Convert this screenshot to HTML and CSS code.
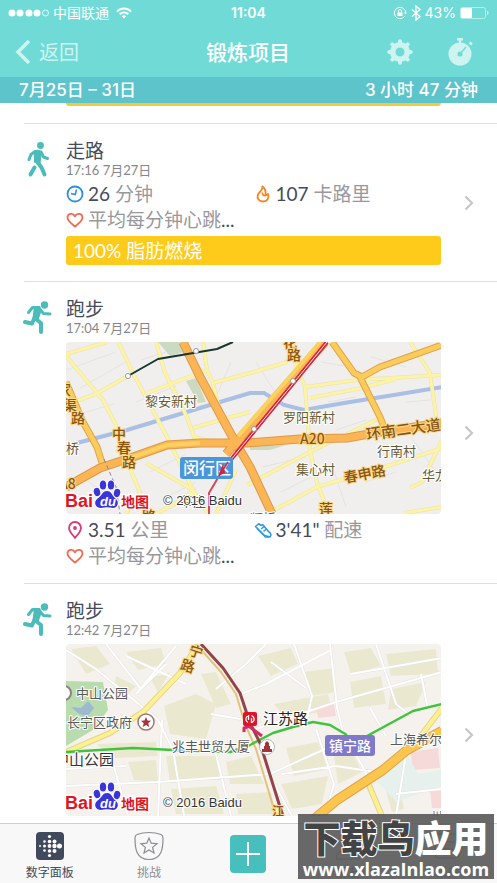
FILE: index.html
```html
<!DOCTYPE html>
<html lang="zh-CN">
<head>
  <meta charset="UTF-8">
  <meta name="viewport" content="width=device-width, initial-scale=1.0">
  <title>锻炼项目</title>
  <link rel="stylesheet" href="styles.css">
</head>
<body>
  <svg class="defs" aria-hidden="true">
    <symbol id="runner" viewBox="0 0 30 34">
      <circle cx="21.500" cy="4" r="3.700"/>
      <path d="M5.500 11.500L9.500 6.500L15.500 6.500" class="limb thin"/>
      <path d="M15 9L11.500 17L18 22V31" class="limb"/>
      <path d="M16 7.500L20.500 12.500L27 13" class="limb thin"/>
      <path d="M11 18L9 22.500L2 21" class="limb"/>
      <path d="M11 5L17 5L19 9L15.500 18.500L9.500 17Z"/>
    </symbol>
    <symbol id="heart" viewBox="0 0 18 18">
      <path d="M9 15.500C5.500 12.500 1.500 10 1.500 6.500C1.500 2.500 7 1.500 9 5.200C11 1.500 16.500 2.500 16.500 6.500C16.500 10 12.500 12.500 9 15.500Z" fill="none" stroke="#f26a50" stroke-width="1.800" stroke-linejoin="round"/>
    </symbol>
    <symbol id="pin" viewBox="0 0 18 18">
      <path d="M9 17C6 13 3 10.500 3 7A6 6 0 0 1 15 7C15 10.500 12 13 9 17Z" fill="none" stroke="#db3a78" stroke-width="1.800" stroke-linejoin="round"/>
      <circle cx="9" cy="7" r="1.900" fill="#db3a78"/>
    </symbol>
    <symbol id="shoe" viewBox="0 0 18 18">
      <path d="M1.500 5.500L5 2.500C6 4.500 7.500 4.500 8.500 3.500L15 11C17 12 17.500 14 16 16L10.500 14.500L1.500 5.500Z" fill="none" stroke="#2e9ae0" stroke-width="1.600" stroke-linejoin="round"/>
      <path d="M3 7.500L11.500 16H15M7 8L10 5.500M9.500 10.500L12.500 8" fill="none" stroke="#2e9ae0" stroke-width="1.500"/>
    </symbol>
    <symbol id="chevron" viewBox="0 0 10 16">
      <path d="M1.500 1.500L8 8L1.500 14.500" fill="none" stroke="#c6c6ca" stroke-width="2.200"/>
    </symbol>
    <symbol id="baidu" viewBox="0 0 180 34" overflow="visible">
      <g class="logo-text">
        <text x="-1" y="27" font-size="18">Bai</text>
        <text x="55" y="27" font-size="14">地图</text>
      </g>
      <g fill="#3a35d8" stroke="#fff" stroke-width="2" paint-order="stroke">
        <ellipse cx="31" cy="12" rx="3.200" ry="4.200" transform="rotate(-15 31 12)"/>
        <ellipse cx="37" cy="5" rx="3.200" ry="4.500"/>
        <ellipse cx="45" cy="5" rx="3.200" ry="4.500"/>
        <ellipse cx="51" cy="13" rx="3.200" ry="4.200" transform="rotate(15 51 13)"/>
        <path d="M41 11C46 11 46 16 50 19C54 23 51 28 47 28C43 27 39 27 35 28C30 28 27 23 31 19C36 16 36 11 41 11Z"/>
      </g>
      <text x="34" y="26" class="logo-du">du</text>
      <text x="97" y="25" class="credit">© 2016 Baidu</text>
    </symbol>
  </svg>

  <header class="header">
    <div class="status">
      <div class="status-left">
        <svg width="41" height="10" viewBox="0 0 41 10">
          <g fill="#fff"><circle cx="4" cy="5" r="3.500"/><circle cx="12" cy="5" r="3.500"/><circle cx="21" cy="5" r="3.500"/><circle cx="29" cy="5" r="3.500"/></g>
          <circle cx="37.500" cy="5" r="3" fill="none" stroke="#fff" stroke-width=".8"/>
        </svg>
        <span>中国联通</span>
        <svg width="16" height="12" viewBox="0 0 16 12" fill="none" stroke="#fff" stroke-width="2">
          <path d="M1 4.500C5 .5 11 .5 15 4.500M3.700 7.200C6.200 4.900 9.800 4.900 12.300 7.200"/>
          <path d="M8 11.500L5.700 9.200C7 8 9 8 10.300 9.200Z" fill="#fff" stroke="none"/>
        </svg>
      </div>
      <strong>11:04</strong>
      <div class="status-right">
        <svg width="14" height="14" viewBox="0 0 14 14" fill="none" stroke="#fff">
          <path d="M11.500 10.500A5.700 5.700 0 1 1 12.700 7"/>
          <path d="M11 6.500H14L12.600 8.500Z" fill="#fff" stroke="none"/>
          <rect x="4.500" y="6.500" width="5" height="3.500" fill="#fff" stroke="none"/>
          <path d="M5.500 6.500V5A1.500 1.500 0 0 1 8.500 5V6.500"/>
        </svg>
        <svg width="10" height="16" viewBox="0 0 10 16" fill="none" stroke="#fff" stroke-width="1.300">
          <path d="M1 4.500L9 11.500L5 15V1L9 4.500L1 11.500"/>
        </svg>
        <span>43%</span>
        <svg width="29" height="12" viewBox="0 0 29 12">
          <rect x=".5" y=".5" width="25" height="11" rx="2" fill="none" stroke="#b5eeea"/>
          <rect x="1" y="1" width="11" height="10" rx="1" fill="#fff"/>
          <path d="M27 4C29 4.500 29 7.500 27 8Z" fill="#d0f3f0"/>
        </svg>
      </div>
    </div>
    <nav class="nav">
      <button type="button" class="back">
        <svg width="16" height="26" viewBox="0 0 16 26"><path d="M14 2L3 13L14 24" fill="none" stroke="currentColor" stroke-width="3.500"/></svg>
        返回
      </button>
      <h1>锻炼项目</h1>
      <div class="actions">
        <button type="button" aria-label="设置">
          <svg width="26" height="26" viewBox="-13 -13 26 26">
            <circle r="7.300" fill="none" stroke="currentColor" stroke-width="5.500"/>
            <g stroke="currentColor" stroke-width="4" stroke-linecap="round">
              <path d="M0 -10.800V-9M0 10.800V9M-10.800 0H-9M10.800 0H9M-7.700 -7.700L-7 -7M7.700 7.700L7 7M-7.700 7.700L-7 7M7.700 -7.700L7 -7"/>
            </g>
          </svg>
        </button>
        <button type="button" aria-label="秒表">
          <svg width="26" height="28" viewBox="0 0 26 28">
            <circle cx="13" cy="16" r="11.500" fill="currentColor"/>
            <path d="M10 1.200H16M13 1V5M22.500 4.500L25 6.500" stroke="currentColor" stroke-width="2.400"/>
            <path d="M13 16L19 9" stroke="#70dbd6" stroke-width="1.500"/>
            <circle cx="13" cy="16" r="2.600" fill="#70dbd6"/>
          </svg>
        </button>
      </div>
    </nav>
    <div class="range">
      <span>7月25日 – 31日</span>
      <span>3 小时 47 分钟</span>
    </div>
  </header>

  <main class="list">
    <div class="previous"><div class="zone-end"></div></div>

    <article class="item">
      <svg class="item-icon" viewBox="0 0 30 36">
        <circle cx="16.500" cy="3.500" r="3.400"/>
        <path d="M11 9.500L7 12.500L5 17.500" class="limb thin"/>
        <path d="M17 10L19.500 15L23.500 16.500" class="limb thin"/>
        <path d="M13 19.500L17.500 25.500L20.500 32.500" class="limb"/>
        <path d="M10.500 25.500L6.500 32.500" class="limb"/>
        <path d="M10 8.500C12 7 17 7.500 18 10L16.500 21.500L10 20.500Z"/>
      </svg>
      <div class="item-body">
        <h2>走路</h2>
        <time>17:16 7月27日</time>
        <div class="stats">
          <div class="stat">
            <svg class="stat-icon" viewBox="0 0 18 18"><g fill="none" stroke="#2f8fdc"><circle cx="9" cy="9" r="7.500" stroke-width="1.800"/><path d="M10.500 4.500L9.300 9.500L5 8.500" stroke-width="1.500"/></g></svg>
            <span><b>26</b> 分钟</span>
          </div>
          <div class="stat">
            <svg class="stat-icon" viewBox="0 0 18 18"><path d="M8.500 1.500C9 5.500 5 6.500 3.800 10C2.500 14 5.500 16.500 9 16.500C13 16.500 15.500 13.500 14 9L11.500 10.500C11.800 8 11.500 3.500 8.500 1.500ZM8.500 7.500C8 10 10 11 11.500 10.500" fill="none" stroke="#f58220" stroke-width="1.800" stroke-linejoin="round"/></svg>
            <span><b>107</b> 卡路里</span>
          </div>
          <div class="stat"><svg class="stat-icon"><use href="#heart"/></svg><span>平均每分钟心跳<b>...</b></span></div>
        </div>
        <div class="zone">100% 脂肪燃烧</div>
      </div>
      <svg class="chevron"><use href="#chevron"/></svg>
    </article>

    <article class="item">
      <svg class="item-icon run"><use href="#runner"/></svg>
      <div class="item-body">
        <h2>跑步</h2>
        <time>17:04 7月27日</time>
        <svg class="map" viewBox="0 0 375 172" preserveAspectRatio="xMidYMid slice">
          <rect width="375" height="172" fill="#f1efed"/>
          <!-- side streets -->
          <path d="M0 28L50 10M14 46L60 20M70 60L110 44M75 18L100 10M20 70L48 62M84 130L120 112M95 158L130 140M150 55L165 20M190 20L215 60M196 125L240 115M215 150L245 135M262 60L290 55M270 88L300 78M300 140L330 130M265 120L280 165M340 60L365 58M345 95L370 130M305 15L340 25M20 138L50 160M255 20L285 25" fill="none" stroke="#e4e3e1"/>
          <path d="M92 0L116 0L118 10L104 14ZM120 39L130 36L140 60L132 61ZM184 104L220 103L204 108L184 108Z" fill="#ccdac1"/>
          <!-- river -->
          <path d="M11 101L61 88L134 66L184 51L198 51L218 63L238 68L278 61L328 53L376 45" fill="none" stroke="#a9bfe4" stroke-width="4"/>
          <g class="roads">
            <path id="minor" d="M0 14L37 58L49 81L62 121L74 151L80 172M52 0L67 31L101 95L127 148L142 172M90 0L99 31L121 75L128 95L160 103M0 12L41 0M0 63L30 52L62 34M137 0L141 28L147 41L184 31L221 20M81 51L141 28M127 86L161 76L184 70M80 121L127 148L117 158M147 41L155 74M224 8L239 45L244 108L251 141L263 172M239 45L291 38L376 33M244 56L291 47L330 37M181 143L248 108L314 76M208 168L251 145L331 121L376 106M344 0L364 31L371 81M344 146L356 140L376 98M338 171L376 165M150 172L170 128M90 172L130 150M60 172L74 151"/>
          </g>
          <use href="#minor" class="road-fill"/>
          <g fill="none" stroke-linejoin="round">
            <path d="M0 40L17 80L31 105L38 127M266 0L288 31L296 35L314 25L376 3M294 35L314 75L322 95" stroke="#dfa24a" stroke-width="7"/>
            <path d="M0 40L17 80L31 105L38 127M266 0L288 31L296 35L314 25L376 3M294 35L314 75L322 95" stroke="#fbcb5c" stroke-width="5"/>
            <path d="M0 145L34 126L67 115L101 103L134 101L181 101L234 97L281 96L314 90L376 81M117 0L134 35L161 85L171 103L184 125L206 172M160 112L181 88L222 41L259 0" stroke="#dc9a4c" stroke-width="9"/>
            <path d="M0 145L34 126L67 115L101 103L134 101L181 101L234 97L281 96L314 90L376 81M117 0L134 35L161 85L171 103L184 125L206 172M160 112L181 88L222 41L259 0" stroke="#fbb555" stroke-width="7"/>
            <path d="M67 115L101 103L134 101M172 94L222 37L254 0" stroke="#fbd25f" stroke-width="4"/>
            <path d="M62 34L92 17L151 7L167 0" stroke="#16362f" stroke-width="2"/>
            <path d="M261 0L181 98L154 131" stroke="#d5243c" stroke-width="4"/>
            <path d="M261 0L181 98L160 124" stroke="#fbeaea" stroke-width="1"/>
            <path d="M156 129L143 151L143 172" stroke="#d8485a" stroke-width="2"/>
            <path d="M38 117L50 145L54 172" stroke="#888899" stroke-dasharray="4 3"/>
          </g>
          <g fill="#fff" stroke="#999"><circle cx="62" cy="34" r="2.500"/><circle cx="130" cy="9" r="2.500"/><circle cx="227" cy="39" r="2.500"/><circle cx="188" cy="87" r="2.500"/></g>
          <g class="place">
            <text x="79" y="64">黎安新村</text>
            <text x="217" y="80">罗阳新村</text>
            <text x="230" y="132">集心村</text>
            <text x="311" y="114">行南村</text>
            <text x="356" y="138">华龙</text>
            <text x="0" y="111">桥</text>
            <text x="114" y="164">莘庄</text>
            <text x="184" y="181">颛桥</text>
          </g>
          <g class="road-name">
            <text x="-9" y="53">家</text><text x="-3" y="68">渠</text><text x="5" y="81">路</text>
            <text x="46" y="97">中</text><text x="51" y="111">春</text><text x="56" y="125">路</text>
            <text x="217" y="5">花</text><text x="221" y="18">路</text>
            <text x="234" y="102">A20</text><text x="-7" y="147">A8</text>
            <text x="301" y="98" font-size="15" transform="rotate(-8 301 98)">环南二大道</text>
            <text x="279" y="141" transform="rotate(-11 279 141)">春申路</text>
            <text x="253" y="172">莲</text><text x="76" y="179">路</text>
          </g>
          <rect x="114" y="115" width="53" height="22" rx="3" fill="#4b96db"/>
          <text x="117" y="132" class="badge-text" font-size="16">闵行区</text>
          <path d="M157 122L152 134L159 131Z" fill="#d5243c"/>
          <path d="M153 134L162 120" stroke="#d5243c" stroke-width="1.500"/>
          <use href="#baidu" y="138" width="180" height="34"/>
        </svg>
        <div class="stats after-map">
          <div class="stat"><svg class="stat-icon"><use href="#pin"/></svg><span><b>3.51</b> 公里</span></div>
          <div class="stat"><svg class="stat-icon"><use href="#shoe"/></svg><span><b>3'41"</b> 配速</span></div>
          <div class="stat"><svg class="stat-icon"><use href="#heart"/></svg><span>平均每分钟心跳<b>...</b></span></div>
        </div>
      </div>
      <svg class="chevron"><use href="#chevron"/></svg>
    </article>

    <article class="item">
      <svg class="item-icon run"><use href="#runner"/></svg>
      <div class="item-body">
        <h2>跑步</h2>
        <time>12:42 7月27日</time>
        <svg class="map" viewBox="0 0 375 172" preserveAspectRatio="xMidYMid slice">
          <rect width="375" height="172" fill="#f5f2ee"/>
          <!-- city blocks -->
          <path d="M5 5L30 2L44 20L20 30ZM60 8L95 4L100 20L72 26ZM50 32L70 42L60 52L48 46ZM84 34L104 28L92 48ZM98 62L130 50L150 60L140 95L104 90ZM135 30L150 28L165 60L150 64ZM30 100L90 98L92 112L50 114ZM62 118L90 116L92 138L68 136ZM100 112L150 112L154 134L104 138ZM160 118L185 112L198 140L164 140ZM105 145L150 142L158 170L110 170ZM170 150L205 148L210 170L172 170ZM192 12L225 4L232 20L205 32ZM238 28L268 24L270 48L245 52ZM278 8L305 4L315 22L285 30ZM320 10L370 5L372 30L325 32ZM284 38L315 32L320 60L288 64ZM208 60L262 50L266 66L220 74ZM220 104L252 98L262 125L228 132ZM215 140L262 132L256 160L226 165ZM268 112L288 112L296 128L272 140ZM325 45L360 38L350 62L322 66ZM318 140L332 136L338 165L326 168Z" fill="#eae9d0"/>
          <path d="M345 108L372 104L374 124L346 126ZM364 146L375 144V164H366ZM250 62L268 60L270 72L252 74Z" fill="#f6dada"/>
          <path d="M310 136L342 112L352 130L375 126V142L330 158Z" fill="#e6f0ec"/>
          <path d="M0 37L37 38L42 66L27 86L0 102Z" fill="#b9dcae"/>
          <path d="M5 63L15 64L22 57L28 64L21 73L12 69Z" fill="#9cb9cf"/>
          <g fill="none" stroke="#e6e4e0" stroke-width="3"><path id="streets" d="M0 6L30 25L92 76L107 106M40 0L75 45L100 20M60 12L120 40M96 76L92 172M0 142L92 138L204 130L270 100M107 106L118 172M150 110L165 172M70 50L110 2M175 50L200 40L265 6M150 45L180 20L200 0M264 0L271 63L277 89L297 123L304 139M190 85L270 58L376 28M310 0L330 60L345 72M228 0L246 52L240 80M204 132L226 172M216 130L270 122L310 128M250 85L268 140L262 160M340 110L330 172M330 150L375 145M285 30L376 14M45 112L62 172M0 125L60 122M145 70L180 76M205 18L240 44M355 30L362 66M320 92L304 64"/></g>
          <use href="#streets" fill="none" stroke="#fff" stroke-width="2"/>
          <g fill="none" stroke-linejoin="round">
            <path d="M0 108L44 89L77 68L114 29L132 0M376 64L354 93L335 112M302 139L316 172" stroke="#e2d48b" stroke-width="6"/>
            <path d="M0 108L44 89L77 68L114 29L132 0M376 64L354 93L335 112M302 139L316 172" stroke="#fcf092" stroke-width="4"/>
            <path d="M247 176L271 156L317 126L341 106L376 87" stroke="#dfa54c" stroke-width="10"/>
            <path d="M247 176L271 156L317 126L341 106L376 87" stroke="#fcc64e" stroke-width="8"/>
            <path d="M130 0L155 28L170 50L179 80L190 105L210 172" stroke="#e3c37c" stroke-width="2"/>
            <path d="M0 108L67 104L107 106L164 108L184 101L207 89L227 83L247 78L264 81L281 91M301 92L347 67L376 60" stroke="#41c33f" stroke-width="2.500"/>
            <path d="M135 0L157 24L174 49L184 79L194 99L214 163L217 172" stroke="#93434a" stroke-width="3"/>
            <path d="M184 82L178 84V88M184 83L196 92" stroke="#d52a62" stroke-width="3"/>
          </g>
          <g class="place dark">
            <text x="10" y="54">中山公园</text>
            <text x="1" y="83">长宁区政府</text>
            <text x="106" y="107">兆丰世贸大厦</text>
            <text x="324" y="100">上海希尔顿</text>
            <text x="-12" y="121" font-size="15" fill="#333">中山公园</text>
            <text x="197" y="80" font-size="15" fill="#222">江苏路</text>
            <text x="366" y="175" font-size="10">川</text>
          </g>
          <g class="road-name">
            <text x="123" y="13" transform="rotate(18 130 8)">宁</text>
            <text x="115" y="27" transform="rotate(18 121 21)">路</text>
            <text x="206" y="172" font-size="12">江</text>
          </g>
          <circle cx="-2" cy="49" r="7" fill="#fff" stroke="#8b8478" stroke-width="2"/>
          <circle cx="80" cy="78" r="8" fill="#fff" stroke="#9b7770" stroke-width="1.500"/>
          <path d="M80 73L81.500 76.500L85 76.800L82.300 79.200L83.200 83L80 81L76.800 83L77.700 79.200L75 76.800L78.500 76.500Z" fill="#a3363d"/>
          <circle cx="201" cy="103" r="7.500" fill="#fff" stroke="#bbb"/>
          <path d="M196 108H206V105H204V102H203V99L201 97L199 99V102H198V105H196Z" fill="#a3363d"/>
          <rect x="177" y="68" width="14" height="14" rx="2" fill="#dc1528"/>
          <path d="M182.500 71.500C179 73 179 77 182 78.500M185.500 71.500C189 73 189 77 186 78.500M182.500 71V76M185.500 74V79" fill="none" stroke="#fff" stroke-width="1.300"/>
          <rect x="259" y="91" width="50" height="21" rx="3" fill="#8079ca"/>
          <text x="263" y="107" class="badge-text" font-size="14">镇宁路</text>
          <use href="#baidu" y="138" width="180" height="34"/>
        </svg>
        <div class="stats after-map">
          <div class="stat"><svg class="stat-icon"><use href="#pin"/></svg><span><b>3.20</b> 公里</span></div>
          <div class="stat"></div>
          <div class="stat"><svg class="stat-icon"><use href="#heart"/></svg><span>平均每分钟心跳<b>...</b></span></div>
        </div>
      </div>
      <svg class="chevron"><use href="#chevron"/></svg>
    </article>
  </main>

  <nav class="tabs">
    <a href="#" class="tab active">
      <svg width="30" height="30" viewBox="0 0 30 30">
        <rect x="1" y="1" width="28" height="28" rx="4" fill="#404a5c"/>
        <g fill="#fff">
          <circle cx="5" cy="15" r="1"/>
          <circle cx="9.500" cy="10.500" r="1.300"/><circle cx="9.500" cy="15" r="1.500"/><circle cx="9.500" cy="19.500" r="1.300"/>
          <circle cx="14.500" cy="5.500" r="1.600"/><circle cx="14.500" cy="10.500" r="1.800"/><circle cx="14.500" cy="15" r="1.900"/><circle cx="14.500" cy="20" r="1.800"/><circle cx="14.500" cy="24.500" r="1.600"/>
          <circle cx="19.500" cy="10.500" r="2"/><circle cx="19.500" cy="15" r="2.200"/><circle cx="19.500" cy="20" r="2"/>
          <circle cx="24.500" cy="15" r="2.500"/>
        </g>
      </svg>
      <span>数字面板</span>
    </a>
    <a href="#" class="tab">
      <svg width="30" height="30" viewBox="0 0 30 30" fill="none" stroke="#8d8d92" stroke-width="1.200">
        <path d="M15 1.500C19 1.500 23 2 27 3.500C28.500 4 29 5 29 7C29 17 28 28.500 15 28.500C2 28.500 1 17 1 7C1 5 1.500 4 3 3.500C7 2 11 1.500 15 1.500Z"/>
        <path d="M15 7L17.200 12.200L23 12.700L18.600 16.400L20 22L15 19L10 22L11.400 16.400L7 12.700L12.800 12.200Z"/>
      </svg>
      <span>挑战</span>
    </a>
    <button type="button" class="add" aria-label="添加">
      <svg width="24" height="24" viewBox="0 0 24 24"><path d="M12 0V24M0 12H24" stroke="#fff" stroke-width="2"/></svg>
    </button>
    <a href="#" class="tab">
      <svg width="30" height="30" viewBox="0 0 30 30" fill="none" stroke="#8d8d92"><circle cx="15" cy="9" r="6"/><path d="M3 28C4 15 26 15 27 28Z"/></svg>
      <span>朋友</span>
    </a>
    <a href="#" class="tab">
      <svg width="30" height="30" viewBox="0 0 30 30" fill="none" stroke="#8d8d92"><rect x="3" y="3" width="24" height="24" rx="3"/><path d="M8 11H22M8 18H22"/></svg>
      <span>帐户</span>
    </a>
  </nav>

  <div class="watermark">
    <div class="brand"><span>下载鸟</span>应用</div>
    <div class="site">www.xlazaInlao.com</div>
  </div>
</body>
</html>
```
FILE: styles.css
```css
* {
  margin: 0;
  padding: 0;
  box-sizing: border-box;
}

body {
  height: 100vh;
  display: flex;
  flex-direction: column;
  position: relative;
  overflow: hidden;
  background: #fff;
  font-family: Lato, 'Noto Sans CJK SC', sans-serif;
  color: #454b5a;
}

button {
  background: none;
  border: none;
  font: inherit;
  color: inherit;
  cursor: pointer;
}

svg {
  display: block;
  flex-shrink: 0;
}

.defs {
  position: absolute;
  width: 0;
  height: 0;
}

/* header */
.header {
  background: #70dbd6;
  color: #fff;
}

.status,
.nav {
  display: grid;
  grid-template-columns: 1fr auto 1fr;
  align-items: center;
}

.status {
  height: 26px;
  padding: 0 8px;
  font-family: Inter, 'Noto Sans CJK SC', sans-serif;
  font-size: 14px;
  line-height: 20px;
}

.status strong {
  font-weight: 600;
}

.status-left,
.status-right {
  display: flex;
  align-items: center;
  gap: 4px;
}

.status-left svg:last-child {
  margin-left: 3px;
}

.status-right {
  justify-content: flex-end;
}

.nav {
  height: 51px;
  padding: 0 24px 0 15px;
}

.back {
  display: flex;
  align-items: center;
  gap: 8px;
  font-size: 20px;
  line-height: 26px;
  color: #cdf4f1;
}

.nav h1 {
  font-size: 21px;
  font-weight: 500;
  line-height: 26px;
  padding-left: 8px;
}

.actions {
  display: flex;
  justify-content: flex-end;
  align-items: center;
  gap: 34px;
  color: #cdf4f1;
}

.range {
  display: flex;
  justify-content: space-between;
  padding: 0 19px;
  background: #5ec4cb;
  font-family: Inter, 'Noto Sans CJK SC', sans-serif;
  font-size: 17px;
  font-weight: 500;
  line-height: 26px;
}

/* exercise list */
.list {
  flex: 1;
  min-height: 0;
  overflow: hidden;
  padding-left: 24px;
}

.previous {
  padding: 0 56px 17px 42px;
}

.zone-end {
  height: 3px;
  background: #f3cb38;
  border-radius: 0 0 3px 3px;
}

.item {
  display: grid;
  grid-template-columns: 42px minmax(0, 1fr) 56px;
  border-top: 1px solid #dfdfe1;
  padding: 15px 0 14px;
}

.item-icon {
  width: 30px;
  height: 36px;
  margin-top: 3px;
  fill: #4bbcba;
}

.item-icon.run {
  height: 34px;
  margin: 4px 0 0 -1px;
}

.limb {
  fill: none;
  stroke: #4bbcba;
  stroke-width: 4;
  stroke-linecap: round;
  stroke-linejoin: round;
}

.thin {
  stroke-width: 3;
}

.item h2 {
  font-size: 19px;
  font-weight: 400;
  line-height: 24px;
}

.item time {
  display: block;
  font-size: 13px;
  line-height: 14px;
  color: #85868c;
}

.stats {
  display: grid;
  grid-template-columns: 1fr 1fr;
  margin-top: 4px;
}

.stats.after-map {
  margin-top: 3px;
}

.stat {
  display: flex;
  align-items: center;
  height: 26px;
  font-size: 19px;
  line-height: 26px;
  color: #97989d;
  white-space: nowrap;
}

.stat b {
  font-weight: 400;
  color: #454b5a;
}

.stat-icon {
  width: 18px;
  height: 18px;
  margin-right: 4px;
}

.zone {
  margin: 3px 0 2px;
  padding: 0 7px;
  border-radius: 3px;
  background: #ffcb1b;
  color: #fff;
  font-size: 19px;
  line-height: 29px;
}

.chevron {
  width: 10px;
  height: 16px;
  align-self: center;
  justify-self: center;
}

/* maps */
.map {
  width: 100%;
  height: 172px;
  margin-top: 7px;
  border-radius: 4px;
}

.roads {
  fill: none;
  stroke: #e8e2b0;
  stroke-width: 4;
}

.road-fill {
  fill: none;
  stroke: #fcf3a6;
  stroke-width: 3;
}

.place,
.road-name {
  font-family: 'Noto Sans CJK SC', sans-serif;
  font-size: 13px;
  fill: #665a35;
  stroke: #fff;
  stroke-width: 2;
  paint-order: stroke;
}

.place.dark {
  fill: #57565a;
}

.road-name {
  font-size: 14px;
  font-weight: 500;
  fill: #8a5410;
  stroke: #fbd98a;
}

.badge-text {
  font-family: 'Noto Sans CJK SC', sans-serif;
  font-weight: 500;
  fill: #fff;
}

.logo-text {
  font-family: 'Liberation Sans', 'Noto Sans CJK SC', sans-serif;
  font-weight: 700;
  fill: #e1151f;
  stroke: #fff;
  stroke-width: 3;
  paint-order: stroke;
}

.logo-du {
  font: italic 700 13px 'Liberation Sans', sans-serif;
  fill: #fff;
}

.credit {
  font: 13px 'Liberation Sans', sans-serif;
  fill: #333;
  stroke: #fff;
  stroke-width: 2;
  paint-order: stroke;
}

/* tab bar */
.tabs {
  display: grid;
  grid-template-columns: repeat(5, 1fr);
  height: 60px;
  border-top: 1px solid #cfcfd1;
  background: #f8f8f9;
}

.tab {
  display: flex;
  flex-direction: column;
  align-items: center;
  gap: 4px;
  padding-top: 7px;
  font-size: 12px;
  line-height: 16px;
  color: #8d8d92;
  text-decoration: none;
}

.tab.active {
  color: #454b5a;
}

.add {
  display: flex;
  align-items: center;
  justify-content: center;
  align-self: center;
  justify-self: center;
  width: 36px;
  height: 38px;
  border-radius: 4px;
  background: #46bfbd;
}

.watermark {
  position: absolute;
  right: 3px;
  bottom: 4px;
  width: 196px;
  padding-top: 5px;
  background: rgba(88, 88, 88, 0.9);
  color: #fff;
  text-align: center;
  font-weight: 700;
}

.brand {
  font-size: 37px;
  font-weight: 900;
  line-height: 40px;
}

.brand span {
  color: #444;
  -webkit-text-stroke: 2px #fff;
  paint-order: stroke;
}

.site {
  font-family: 'Open Sans', sans-serif;
  font-size: 18px;
  line-height: 20px;
}
```
